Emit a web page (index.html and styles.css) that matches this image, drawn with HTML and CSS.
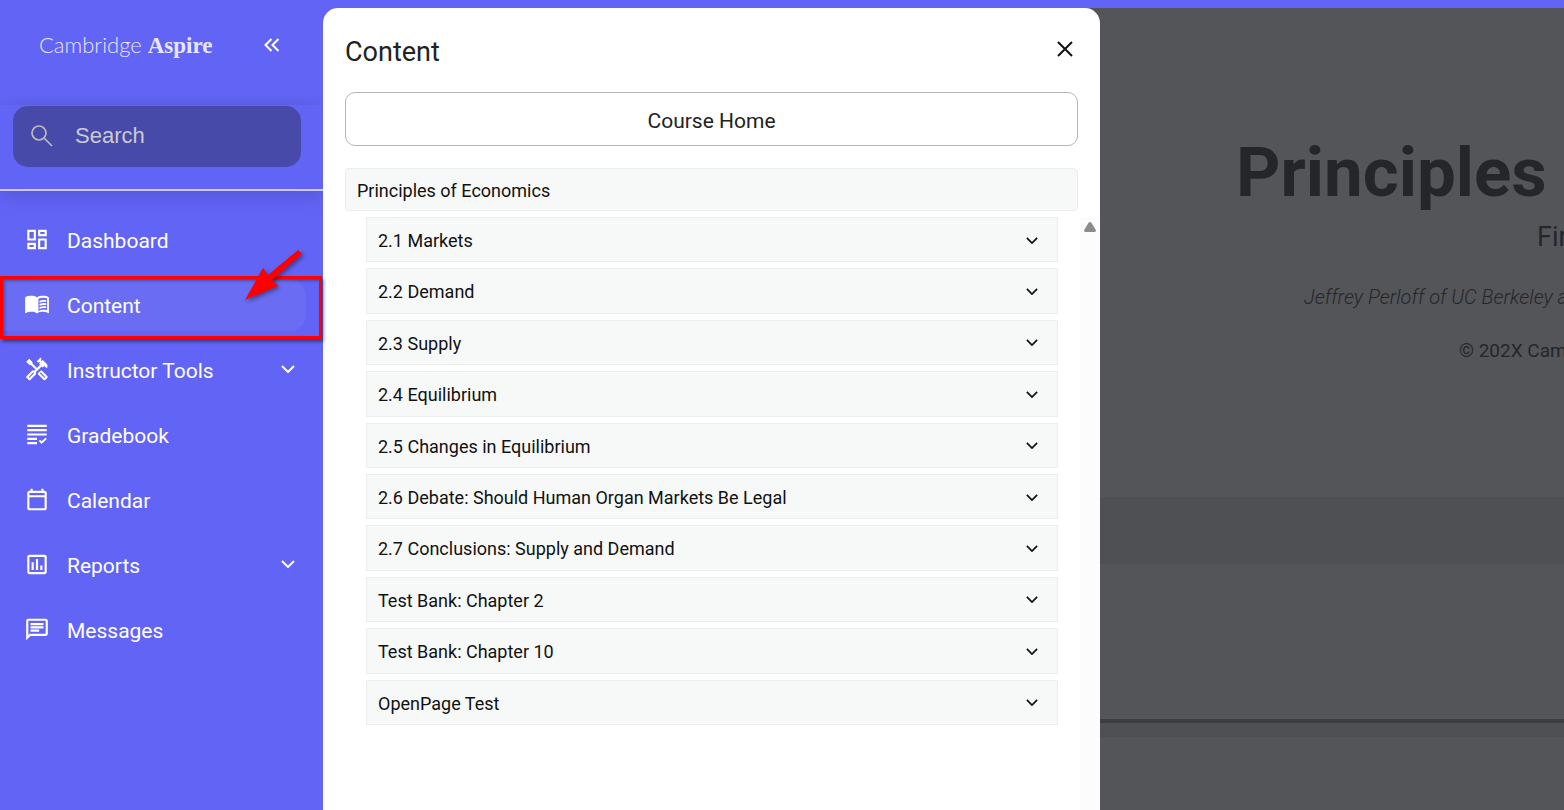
FILE: index.html
```html
<!DOCTYPE html>
<html lang="en">
<head>
    <meta charset="UTF-8">
    <meta name="viewport" content="width=device-width, initial-scale=1.0">
    <title>Cambridge Aspire</title>
    <link rel="stylesheet" href="styles.css">
</head>
<body>

    <!-- Sidebar -->
    <aside class="sidebar">
        <div class="brand">
            <a href="#" class="logo">Cambridge <b>Aspire</b></a>
            <button type="button" class="collapse" aria-label="Collapse menu">
                <svg viewBox="0 0 16 14"><path d="M7.500 1L1.500 7l6 6M14.500 1l-6 6 6 6"/></svg>
            </button>
        </div>

        <form class="search-area">
            <label class="search">
                <svg viewBox="0 0 22 22"><g stroke-width="1.700"><circle cx="8" cy="8" r="7"/><path d="M13 13l8 8"/></g></svg>
                <input type="search" placeholder="Search" aria-label="Search">
            </label>
        </form>

        <nav class="menu">
            <a href="#" class="menu-item">
                <svg class="icon" viewBox="0 0 24 24"><path d="M19 5v2h-4V5h4M9 5v6H5V5h4m10 8v6h-4v-6h4M9 17v2H5v-2h4M21 3h-8v6h8V3zM11 3H3v10h8V3zm10 8h-8v10h8V11zm-10 4H3v6h8v-6z"/></svg>
                <span>Dashboard</span>
            </a>
            <a href="#" class="menu-item active">
                <svg class="icon" viewBox="0 0 24 24"><path fill-rule="evenodd" d="M12 5.500C10.500 4.400 8.500 4 6.500 4S2.500 4.400 1 5.500V19.500c0 .4.300.6.700.4C3.200 19.200 5 18.800 6.500 18.800c2 0 4 .4 5.500 1.500 1.500-1.100 3.500-1.500 5.500-1.500 1.500 0 3.300.4 4.800 1.100.4.200.7 0 .7-.4V5.500C21.500 4.400 19.500 4 17.500 4s-4 .4-5.500 1.500zM21.300 17.300c-2.500-.8-5.800-.5-8 .7V6.800c2.300-1.200 5.500-1.400 8-.5z"/><path d="M14.300 8.600c2-.8 4-1 6.200-.6v1.700c-2.200-.4-4.200-.2-6.200.6zM14.300 11.500c2-.8 4-1 6.200-.6v1.700c-2.200-.4-4.200-.2-6.200.6zM14.300 14.400c2-.8 4-1 6.200-.6v1.700c-2.200-.4-4.200-.2-6.200.6z"/></svg>
                <span>Content</span>
                <span class="highlight"></span>
                <svg class="arrow" viewBox="0 0 60 54"><path d="M1 51L19 19l5 7L54 1l4 4L28 31l6 6z"/></svg>
            </a>
            <a href="#" class="menu-item">
                <svg class="icon" viewBox="0 0 24 24"><path d="M21.670 18.170l-5.300-5.300h-.99l-2.540 2.540v.99l5.300 5.300c.39.39 1.020.39 1.410 0l2.120-2.120c.39-.38.39-1.020 0-1.410zm-2.830 1.420l-4.240-4.240.71-.71 4.240 4.240-.71.71z"/><path d="M17.340 10.190l1.410-1.410 2.120 2.120c1.170-1.170 1.170-3.070 0-4.240l-3.540-3.540-1.410 1.410V1.710l-.7-.71-3.540 3.540.71.71h2.830l-1.410 1.410 1.060 1.060-2.890 2.890-4.130-4.130V5.060L4.830 2.040 2 4.870 5.030 7.900h1.410l4.130 4.130-.85.85H7.600l-5.300 5.300c-.39.39-.39 1.020 0 1.410l2.120 2.120c.39.39 1.020.39 1.410 0l5.300-5.300v-2.120l5.150-5.150 1.060 1.050zm-7.980 5.150l-4.240 4.240-.71-.71 4.240-4.240.71.710z"/></svg>
                <span>Instructor Tools</span>
                <svg class="chevron" viewBox="0 0 14 8"><path d="M1 1l6 6 6-6"/></svg>
            </a>
            <a href="#" class="menu-item">
                <svg class="icon" viewBox="0 0 24 24"><path d="M3 3h18v2H3zM3 7h18v2H3zM3 11h18v2H3zM3 15h9v2H3zM3 19h9v2H3zM16.200 18.200l-1.400-1.400-1.200 1.200 2.600 2.700 4.900-4.600-1.200-1.200z"/></svg>
                <span>Gradebook</span>
            </a>
            <a href="#" class="menu-item">
                <svg class="icon" viewBox="0 0 24 24"><path d="M19 4h-1V2h-2v2H8V2H6v2H5c-1.100 0-2 .9-2 2v14c0 1.100.9 2 2 2h14c1.100 0 2-.9 2-2V6c0-1.100-.9-2-2-2zm0 16H5V10h14v10zm0-12H5V6h14v2z"/></svg>
                <span>Calendar</span>
            </a>
            <a href="#" class="menu-item">
                <svg class="icon" viewBox="0 0 24 24"><path d="M9 17H7v-7h2v7zm4 0h-2V7h2v10zm4 0h-2v-4h2v4zm2 2H5V5h14v14zm0-16H5c-1.100 0-2 .9-2 2v14c0 1.100.9 2 2 2h14c1.100 0 2-.9 2-2V5c0-1.100-.9-2-2-2z"/></svg>
                <span>Reports</span>
                <svg class="chevron" viewBox="0 0 14 8"><path d="M1 1l6 6 6-6"/></svg>
            </a>
            <a href="#" class="menu-item">
                <svg class="icon" viewBox="0 0 24 24"><path d="M4 4h16v12H5.170L4 17.170V4m0-2c-1.100 0-1.990.9-1.990 2L2 22l4-4h14c1.100 0 2-.9 2-2V4c0-1.100-.9-2-2-2H4zm2 10h8v2H6v-2zm0-3h12v2H6V9zm0-3h12v2H6V6z"/></svg>
                <span>Messages</span>
            </a>
        </nav>
    </aside>

    <!-- Content panel -->
    <section class="panel">
        <header class="panel-header">
            <h2>Content</h2>
            <button type="button" class="close" aria-label="Close">
                <svg viewBox="0 0 16 16"><path d="M1 1l14 14M15 1L1 15"/></svg>
            </button>
        </header>
        <button type="button" class="course-home">Course Home</button>
        <h3 class="book">Principles of Economics</h3>
        <div class="scroll-area">
            <ul class="chapters">
                <li><button type="button">2.1 Markets <svg class="chevron" viewBox="0 0 14 8"><path d="M1 1l6 6 6-6"/></svg></button></li>
                <li><button type="button">2.2 Demand <svg class="chevron" viewBox="0 0 14 8"><path d="M1 1l6 6 6-6"/></svg></button></li>
                <li><button type="button">2.3 Supply <svg class="chevron" viewBox="0 0 14 8"><path d="M1 1l6 6 6-6"/></svg></button></li>
                <li><button type="button">2.4 Equilibrium <svg class="chevron" viewBox="0 0 14 8"><path d="M1 1l6 6 6-6"/></svg></button></li>
                <li><button type="button">2.5 Changes in Equilibrium <svg class="chevron" viewBox="0 0 14 8"><path d="M1 1l6 6 6-6"/></svg></button></li>
                <li><button type="button">2.6 Debate: Should Human Organ Markets Be Legal <svg class="chevron" viewBox="0 0 14 8"><path d="M1 1l6 6 6-6"/></svg></button></li>
                <li><button type="button">2.7 Conclusions: Supply and Demand <svg class="chevron" viewBox="0 0 14 8"><path d="M1 1l6 6 6-6"/></svg></button></li>
                <li><button type="button">Test Bank: Chapter 2 <svg class="chevron" viewBox="0 0 14 8"><path d="M1 1l6 6 6-6"/></svg></button></li>
                <li><button type="button">Test Bank: Chapter 10 <svg class="chevron" viewBox="0 0 14 8"><path d="M1 1l6 6 6-6"/></svg></button></li>
                <li><button type="button">OpenPage Test <svg class="chevron" viewBox="0 0 14 8"><path d="M1 1l6 6 6-6"/></svg></button></li>
            </ul>
            <div class="scrollbar">
                <svg viewBox="0 0 12 10"><path d="M6 0c.6 0 1 .2 1.400.8l4.300 7c.6 1.200.2 2.200-1.200 2.200h-9C.1 10-.3 9 .3 7.800l4.300-7C5 .2 5.400 0 6 0z"/></svg>
            </div>
        </div>
    </section>

    <!-- Dimmed page behind the panel -->
    <main class="page">
        <div class="cover">
            <h1>Principles</h1>
            <p class="edition">First</p>
            <p class="authors">Jeffrey Perloff of UC Berkeley and</p>
            <p class="copyright">© 202X Cambridge</p>
        </div>
        <div class="band"></div>
        <div class="block"></div>
        <div class="band band-small"></div>
    </main>

</body>
</html>
```

FILE: styles.css
```css
* {
    box-sizing: border-box;
}

body {
    margin: 0;
    display: flex;
    min-height: 100vh;
    overflow: hidden;
    background-color: #6264f6;
    font-family: Roboto, "Liberation Sans", sans-serif;
    color: #111;
}

button {
    padding: 0;
    border: none;
    background: none;
    font: inherit;
    color: inherit;
    cursor: pointer;
}

svg {
    display: block;
    flex: none;
    fill: none;
    stroke: currentColor;
    stroke-width: 2;
}

h1, h2, h3, p, ul {
    margin: 0;
    padding: 0;
    font-weight: normal;
}

/* Sidebar */
.sidebar {
    position: relative;
    z-index: 2;
    flex: 0 0 323px;
    min-width: 0;
    color: #fff;
}

.brand {
    display: flex;
    justify-content: space-between;
    align-items: center;
    height: 105px;
    padding: 0 43px 15px 39px;
}

.logo {
    font-family: Lato, sans-serif;
    font-size: 22px;
    font-weight: 300;
    color: #e6e6ff;
    text-decoration: none;
}

.logo b {
    font-family: "Liberation Serif", serif;
    font-size: 23px;
    font-weight: bold;
}

.collapse svg {
    width: 16px;
    height: 14px;
}

.search-area {
    padding: 1px 22px 22px 13px;
    border-bottom: 2px solid #c9c9fb;
    box-shadow: 0 4px 20px rgba(0, 0, 0, 0.15);
    clip-path: inset(-10px 0 -30px 0);
}

.search {
    display: flex;
    align-items: center;
    gap: 22px;
    height: 61px;
    padding: 0 18px 2px;
    border-radius: 15px;
    background-color: #474aa8;
}

.search svg {
    width: 22px;
    height: 22px;
    stroke: #bbb;
}

.search input {
    flex: 1;
    width: 100%;
    min-width: 0;
    padding: 0;
    border: none;
    outline: none;
    background: none;
    font-family: "Liberation Sans", Arial, sans-serif;
    font-size: 22px;
    color: #cacad0;
}

.search input::placeholder {
    color: #cacad0;
}

.menu {
    display: flex;
    flex-direction: column;
    gap: 14px;
    padding-top: 24px;
}

.menu-item {
    position: relative;
    display: flex;
    align-items: center;
    gap: 16px;
    height: 51px;
    margin-right: 17px;
    padding: 0 11px 0 24px;
    border-radius: 0 16px 16px 0;
    font-size: 21px;
    color: #fff;
    text-decoration: none;
}

.menu-item.active {
    background-color: #6a6cf3;
}

.icon {
    width: 26px;
    height: 27px;
    margin-right: 1px;
    margin-bottom: 3px;
    fill: currentColor;
    stroke: none;
}

.chevron {
    width: 14px;
    height: 8px;
    margin-left: auto;
    margin-bottom: 3px;
}

.highlight {
    position: absolute;
    inset: -4px -16px -8px 0;
    border: 3px solid #f00;
    box-shadow: 2px 3px 3px rgba(0, 0, 0, 0.4), inset 2px 2px 3px rgba(0, 0, 0, 0.3);
}

.arrow {
    position: absolute;
    top: -31px;
    right: 2px;
    width: 60px;
    height: 54px;
    fill: #f00;
    stroke: none;
    filter: drop-shadow(2px 2px 2px rgba(0, 0, 0, 0.4));
}

/* Content panel */
.panel {
    position: relative;
    z-index: 1;
    display: flex;
    flex-direction: column;
    flex: 0 1 777px;
    margin-top: 8px;
    border-radius: 15px 15px 0 0;
    background-color: #fff;
}

.panel-header {
    display: flex;
    justify-content: space-between;
    align-items: center;
    height: 84px;
    padding: 0 27px 0 22px;
}

.panel-header h2 {
    padding-top: 4px;
    font-size: 27px;
    color: #222;
}

.close svg {
    width: 16px;
    height: 16px;
    margin-bottom: 3px;
}

.course-home {
    height: 54px;
    margin: 0 22px;
    padding-top: 3px;
    border: 1px solid #b5b5b5;
    border-radius: 10px;
    font-size: 21px;
    color: #222;
}

.book {
    margin: 22px 22px 6px;
    padding: 10px 11px 8px;
    border: 1px solid #eceeee;
    border-radius: 4px;
    background-color: #f7f9f8;
    font-size: 18px;
    line-height: 23px;
}

.scroll-area {
    display: flex;
    flex: 1;
}

.chapters {
    display: flex;
    flex-direction: column;
    flex: 1;
    gap: 6px;
    padding: 0 22px 0 43px;
    list-style: none;
}

.chapters button {
    display: flex;
    align-items: center;
    width: 100%;
    padding: 11px 19px 9px 11px;
    border: 1px solid #eceeee;
    background-color: #f7f9f8;
    font-size: 18px;
    line-height: 1.3;
    text-align: left;
}

.chapters .chevron {
    width: 12px;
    height: 7px;
    margin-bottom: 1px;
}

.scrollbar {
    width: 20px;
    padding: 5px 4px;
    background-color: #fcfcfc;
}

.scrollbar svg {
    width: 12px;
    height: 10px;
    fill: #8b8b8b;
    stroke: none;
}

/* Dimmed page */
.page {
    flex: 1 1 0;
    min-width: 0;
    margin-top: 8px;
    margin-left: -16px;
    padding-left: 16px;
    overflow: hidden;
    background-color: #545559;
    color: #25262a;
    white-space: nowrap;
}

.cover {
    height: 489px;
    padding-top: 125px;
}

.cover h1 {
    padding-left: 136px;
    font-size: 69px;
    font-weight: bold;
    line-height: 80px;
}

.edition {
    padding-left: 437px;
    font-size: 27px;
    line-height: 48px;
}

.authors {
    padding-left: 204px;
    font-size: 20px;
    font-style: italic;
    font-weight: 300;
    line-height: 72px;
}

.copyright {
    padding-left: 359px;
    font-size: 19px;
    line-height: 36px;
}

.band {
    height: 67px;
    margin-left: -16px;
    background-color: #4f5054;
}

.block {
    height: 159px;
    margin-left: -16px;
    border-bottom: 4px solid #3d3e42;
}

.band-small {
    height: 14px;
}
```
